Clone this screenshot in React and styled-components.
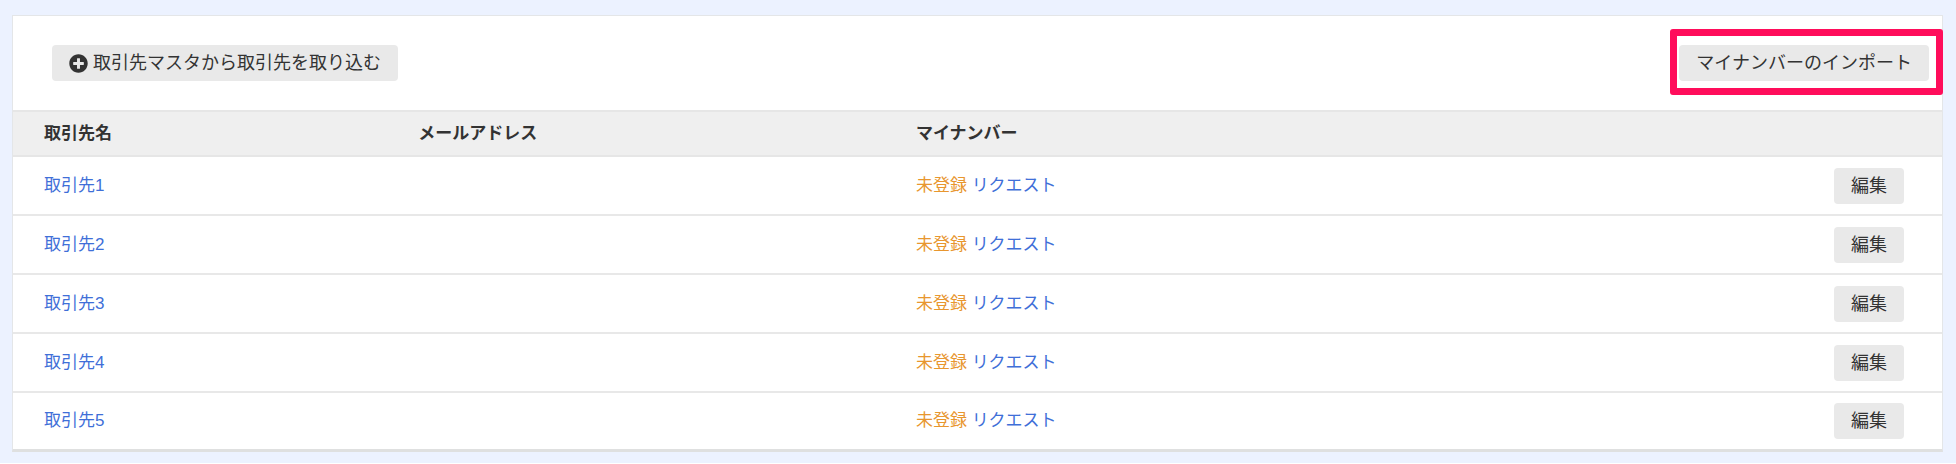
import React from 'react'
import styled, { createGlobalStyle } from 'styled-components'
import { FaPlusCircle } from 'react-icons/fa'

const GlobalStyle = createGlobalStyle`
  body {
    margin: 0;
    background: #fff;
    color: #333;
    font-family: 'Liberation Sans', 'Noto Sans CJK JP', sans-serif;
    font-size: 17px;
    line-height: 24px;
  }
`

const Page = styled.main`
  padding: 15px 13px 11px 12px;
  background: #ecf2ff;
`

const Panel = styled.section`
  background: #fff;
  border: 1px solid #e4e6e8;
  border-bottom: 3px solid #dfe0e0;
`

const Toolbar = styled.div`
  display: flex;
  align-items: center;
  justify-content: space-between;
  padding: 29px 13px 29px 39px;
`

const Button = styled.button`
  display: inline-flex;
  align-items: center;
  gap: 5px;
  height: 36px;
  padding: 0 17px;
  border: 0;
  border-radius: 4px;
  background: #e9e9e9;
  color: #333;
  font-family: inherit;
  font-size: 18px;
  line-height: 24px;
  white-space: nowrap;
  vertical-align: middle;
  cursor: pointer;
`

const PlusIcon = styled(FaPlusCircle)`
  width: 19px;
  height: 19px;
`

const Highlight = styled.div`
  position: relative;

  &::after {
    content: '';
    position: absolute;
    inset: -16px -14px -14px -9px;
    border: 7px solid #ff0d5b;
    border-radius: 3px;
    pointer-events: none;
  }
`

const Table = styled.table`
  width: 100%;
  table-layout: fixed;
  border-collapse: separate;
  border-spacing: 0;
`

const Th = styled.th`
  box-sizing: border-box;
  width: ${(props) => props.$width};
  height: 47px;
  padding: 0 0 0 31px;
  border-top: 2px solid #e6e6e6;
  border-bottom: 2px solid #e6e6e6;
  background: #efefef;
  text-align: left;
`

const Td = styled.td`
  box-sizing: border-box;
  height: 59px;
  padding: ${(props) => (props.$end ? '0 38px 0 0' : '0 0 0 31px')};
  border-bottom: 2px solid #e8e8e8;
  text-align: ${(props) => (props.$end ? 'right' : 'left')};

  tr:last-child > & {
    height: 56px;
    border-bottom: 0;
  }
`

const Link = styled.a`
  color: #3f6fd8;
  text-decoration: none;
`

const Status = styled.span`
  color: #e8962e;
`

const partners = ['取引先1', '取引先2', '取引先3', '取引先4', '取引先5']

const PartnerRow = ({ name }) => (
  <tr>
    <Td>
      <Link href="#partner">{name}</Link>
    </Td>
    <Td />
    <Td>
      <Status>未登録</Status> <Link href="#request">リクエスト</Link>
    </Td>
    <Td $end>
      <Button type="button">編集</Button>
    </Td>
  </tr>
)

const App = () => (
  <>
    <GlobalStyle />
    <Page>
      <Panel>
        <Toolbar>
          <Button type="button">
            <PlusIcon aria-hidden="true" />
            取引先マスタから取引先を取り込む
          </Button>
          <Highlight>
            <Button type="button">マイナンバーのインポート</Button>
          </Highlight>
        </Toolbar>
        <Table>
          <thead>
            <tr>
              <Th $width="19.4%">取引先名</Th>
              <Th $width="25.8%">メールアドレス</Th>
              <Th>マイナンバー</Th>
              <Th $width="10%" />
            </tr>
          </thead>
          <tbody>
            {partners.map((name) => (
              <PartnerRow key={name} name={name} />
            ))}
          </tbody>
        </Table>
      </Panel>
    </Page>
  </>
)

export default App
